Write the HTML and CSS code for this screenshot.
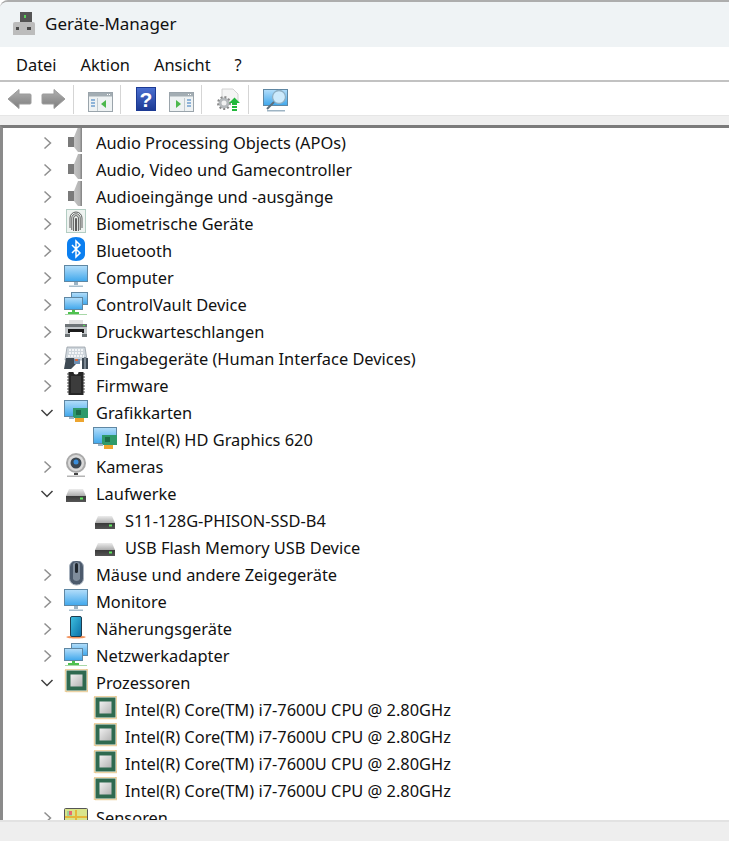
FILE: index.html
```html
<!DOCTYPE html>
<html lang="de">
<head>
    <meta charset="UTF-8">
    <title>Geräte-Manager</title>
    <link rel="stylesheet" href="styles.css">
</head>
<body>
    <svg class="defs" width="0" height="0">
        <defs>
            <linearGradient id="screen" x1="0" y1="0" x2="0" y2="1"><stop offset="0" stop-color="#b4defa"/><stop offset="1" stop-color="#3fa7ec"/></linearGradient>
            <linearGradient id="cone" x1="0" y1="0" x2="1" y2="0"><stop offset="0" stop-color="#c2c2c2"/><stop offset=".7" stop-color="#b4b4b4"/><stop offset="1" stop-color="#7e7e7e"/></linearGradient>
            <linearGradient id="arrow" x1="0" y1="0" x2="0" y2="1"><stop offset="0" stop-color="#b0b0b0"/><stop offset="1" stop-color="#7d7d7d"/></linearGradient>
            <linearGradient id="drive" x1="0" y1="0" x2="0" y2="1"><stop offset="0" stop-color="#ececec"/><stop offset=".5" stop-color="#b0b0b0"/><stop offset=".55" stop-color="#3a3a3a"/><stop offset="1" stop-color="#555"/></linearGradient>
            <linearGradient id="phone" x1="0" y1="0" x2="1" y2="1"><stop offset="0" stop-color="#3fc0e0"/><stop offset="1" stop-color="#0a6fa8"/></linearGradient>
            <linearGradient id="die" x1="0" y1="0" x2="1" y2="1"><stop offset="0" stop-color="#f0f0f0"/><stop offset="1" stop-color="#b4b4b4"/></linearGradient>

            <symbol id="i-speaker" viewBox="0 0 24 26" overflow="visible">
                <path d="M4 8h6v10H4z" fill="#7a7a7a"/>
                <path d="M10 8l4-10h4v25h-4l-4-5z" fill="url(#cone)"/>
            </symbol>
            <symbol id="i-finger" viewBox="0 0 24 26" overflow="visible">
                <rect x="2.500" y="-.5" width="19" height="23" fill="#eef3f0" stroke="#b3cdc3"/>
                <g fill="none" stroke="#4d4d4d" stroke-width=".9">
                    <path d="M6 18V8a6 6 0 0 1 12 0v10"/>
                    <path d="M7.800 20V8a4.200 4.200 0 0 1 8.400 0v12"/>
                    <path d="M9.600 21V8a2.400 2.400 0 0 1 4.800 0v13"/>
                    <path d="M11.500 21V8.500h1V21"/>
                </g>
            </symbol>
            <symbol id="i-bluetooth" viewBox="0 0 24 26">
                <path d="M12 0c6 0 9 3 9 7v10c0 4-3 7-9 7s-9-3-9-7V7c0-4 3-7 9-7z" fill="#0b7ff0"/>
                <path d="M8 8l8 8-4 4V4l4 4-8 8" fill="none" stroke="#fff" stroke-width="1.500"/>
            </symbol>
            <symbol id="i-monitor" viewBox="0 0 24 26">
                <rect x=".5" y="1.500" width="23" height="16" fill="url(#screen)" stroke="#5f87a3"/>
                <path d="M10 18h4v3h-4z" fill="#9db4c4"/>
                <path d="M5 21.500h14v1.500H5z" fill="#a9bfcd"/>
            </symbol>
            <symbol id="i-network" viewBox="0 0 24 26">
                <rect x="7.500" y="1.500" width="16" height="12" fill="url(#screen)" stroke="#5f87a3"/>
                <rect x=".5" y="6.500" width="18" height="12" fill="url(#screen)" stroke="#5f87a3"/>
                <path d="M8 19h3v2h4v3H4v-3h4z" fill="#4fc14f"/>
                <path d="M1 23h22v1H1z" fill="#a8d8a8"/>
            </symbol>
            <symbol id="i-printer" viewBox="0 0 24 26">
                <path d="M5 2h14v5H5z" fill="#e0e0e0"/>
                <path d="M1 6h22v12H1z" fill="#c3c7ca"/>
                <path d="M1 6h22v3H1z" fill="#6f7578"/>
                <path d="M4 11h16v4H4z" fill="#1c1c1c"/>
                <path d="M6 14h12v5H6z" fill="#fff"/>
                <path d="M1 16h5v3H1zM18 16h5v3h-5z" fill="#6c7275"/>
                <path d="M19 7h2v1h-2z" fill="#4fe04f"/>
            </symbol>
            <symbol id="i-input" viewBox="0 0 24 26">
                <path d="M3 2h18l2 13H1z" fill="#cfd6dc" stroke="#8d979f" stroke-width=".7"/>
                <path d="M5 5h14M5 8h14M4 11h16" stroke="#fff" stroke-width="1.500" stroke-dasharray="2 1"/>
                <path d="M0 24l2-11h8l2 6-5 5zM24 24h-6V13h6z" fill="#3f4a54"/>
                <path d="M20 12h2v12h-2z" fill="#7b8792"/>
                <path d="M10 14h6v5h-6z" fill="#6d8fb3"/>
                <path d="M11 14h3v2h-3z" fill="#d9673c"/>
            </symbol>
            <symbol id="i-chip" viewBox="0 0 24 26">
                <path d="M3 2h3M3 5h3M3 8h3M3 11h3M3 14h3M3 17h3M3 20h3M18 2h3M18 5h3M18 8h3M18 11h3M18 14h3M18 17h3M18 20h3" stroke="#8a8a8a" stroke-width="1.500"/>
                <path d="M4.500 0h5a2.500 2.500 0 0 0 5 0h5v23h-15z" fill="#262626"/>
                <path d="M7 4h10v17H7z" fill="#3c3c3c"/>
            </symbol>
            <symbol id="i-display" viewBox="0 0 24 26">
                <rect x=".5" y="1.500" width="23" height="16" fill="url(#screen)" stroke="#5f87a3"/>
                <path d="M9 9h15v10H9z" fill="#2f9a6b"/>
                <path d="M12 11h5v5h-5z" fill="#1d6d49"/>
                <path d="M11 19h9v4h-9z" fill="#eda52f"/>
                <path d="M5 18h5v2H5z" fill="#9db4c4"/>
            </symbol>
            <symbol id="i-camera" viewBox="0 0 24 26">
                <circle cx="12" cy="10" r="10" fill="#a9a9a9"/>
                <circle cx="12" cy="10" r="8" fill="#d9d9d9"/>
                <circle cx="12" cy="10" r="5.500" fill="#3b4650"/>
                <circle cx="12" cy="9" r="2.500" fill="#3a8edb"/>
                <path d="M10 20h4v2h-4z" fill="#444"/>
                <path d="M3 22.500h18v1.500H3z" fill="#b5b5b5"/>
            </symbol>
            <symbol id="i-drive" viewBox="0 0 24 26">
                <path d="M5 9h14l3 7v6H2v-6z" fill="url(#drive)"/>
                <path d="M16 17.500h3v2h-3z" fill="#5fe85f"/>
            </symbol>
            <symbol id="i-mouse" viewBox="0 0 24 26">
                <rect x="5.500" y="-.5" width="14" height="24.500" rx="6.500" fill="#4c5a6c" stroke="#a9b3bf"/>
                <path d="M9 3a4 4 0 0 1 7 0v15a4 4 0 0 1-7 0z" fill="#7f8c9b"/>
                <rect x="11" y="2" width="3" height="10" rx="1.500" fill="#20262d"/>
            </symbol>
            <symbol id="i-proximity" viewBox="0 0 24 26">
                <path d="M2 22c2-1 6-1.500 10-1.500s8 .5 10 1.500c-2 2-18 2-20 0z" fill="#f2925c"/>
                <rect x="6.500" y="1.500" width="11" height="20" rx="1.500" fill="url(#phone)" stroke="#1f3c4e"/>
            </symbol>
            <symbol id="i-cpu" viewBox="0 0 24 26">
                <rect x="1.500" y=".5" width="22" height="22" fill="none" stroke="#d9a54a" stroke-width="1.500" stroke-dasharray="1 1"/>
                <rect x="2.500" y="1.500" width="20" height="20" fill="#2f6a50"/>
                <rect x="6.500" y="5.500" width="12" height="12" fill="url(#die)"/>
            </symbol>
            <symbol id="i-sensor" viewBox="0 0 24 26">
                <rect x=".5" y="4.500" width="23" height="17" rx="1" fill="#d9e58c" stroke="#555"/>
                <path d="M3 7h5v6H3z" fill="#9fd39a"/>
                <path d="M5 7h3v4H5z" fill="#e8696d"/>
                <path d="M11 6h2v15h-2zM1 12h22v2H1z" fill="#e5b73b"/>
            </symbol>

            <symbol id="t-back" viewBox="0 0 25 22">
                <path d="M1 11L12 1.500v4.500h11a1 1 0 0 1 1 1v8a1 1 0 0 1-1 1H12v4.500z" fill="url(#arrow)" stroke="#9c9c9c"/>
            </symbol>
            <symbol id="t-forward" viewBox="0 0 25 22">
                <path d="M24 11L13 1.500v4.500H2a1 1 0 0 0-1 1v8a1 1 0 0 0 1 1h11v4.500z" fill="url(#arrow)" stroke="#9c9c9c"/>
            </symbol>
            <symbol id="t-pane-left" viewBox="0 0 25 22">
                <rect x=".5" y="1.500" width="24" height="19" fill="#eef2f3" stroke="#9aa4ab"/>
                <path d="M1 2h23v3.500H1z" fill="#a3adb3"/>
                <path d="M19 3h1v1h-1zM21 3h1v1h-1z" fill="#fff"/>
                <path d="M3 8h4v2H3zM3 11h4v2H3zM3 14h4v2H3z" fill="#8fb4d8"/>
                <path d="M9 7h1v13H9z" fill="#c0c9ce"/>
                <path d="M18 9v8l-5-4z" fill="#4cb84c"/>
            </symbol>
            <symbol id="t-pane-right" viewBox="0 0 25 22">
                <rect x=".5" y="1.500" width="24" height="19" fill="#eef2f3" stroke="#9aa4ab"/>
                <path d="M1 2h23v3.500H1z" fill="#a3adb3"/>
                <path d="M19 3h1v1h-1zM21 3h1v1h-1z" fill="#fff"/>
                <path d="M18 8h4v2h-4zM18 11h4v2h-4zM18 14h4v2h-4z" fill="#8fb4d8"/>
                <path d="M15 7h1v13h-1z" fill="#c0c9ce"/>
                <path d="M7 9v8l5-4z" fill="#4cb84c"/>
            </symbol>
            <symbol id="t-update" viewBox="0 0 25 25">
                <path d="M6 1h11l5 5v8H6z" fill="#f5f5f5" stroke="#d2d2d2"/>
                <circle cx="8" cy="15" r="5.500" fill="#b5b9bc"/>
                <circle cx="8" cy="15" r="6" fill="none" stroke="#8a8a8a" stroke-width="2" stroke-dasharray="2 2"/>
                <circle cx="8" cy="15" r="2.500" fill="#f2f2f2"/>
                <path d="M13 15l5.500-5.500L24 15h-3v2h-5v-2z" fill="#22b83c"/>
                <path d="M16 18h5v2h-5zM16 21h5v2h-5z" fill="#22b83c"/>
            </symbol>
            <symbol id="t-scan" viewBox="0 0 25 23">
                <rect x=".5" y=".5" width="24" height="16" fill="url(#screen)" stroke="#5f87a3"/>
                <circle cx="16" cy="8" r="6.500" fill="#cdeafc" stroke="#8fb0c5" stroke-width="1.300"/>
                <path d="M11 13l-7 7" stroke="#5e6e7a" stroke-width="2"/>
                <path d="M4 21h18v1.500H4z" fill="#9db4c4"/>
            </symbol>
            <symbol id="t-app" viewBox="0 0 22 23">
                <path d="M7 0h12v11H7z" fill="#555"/>
                <path d="M11 3h2v3h-2z" fill="#58d058"/>
                <path d="M2 10h18a2 2 0 0 1 2 2v11H0V12a2 2 0 0 1 2-2z" fill="#bcbcbc"/>
                <path d="M3 15h3v3H3zM14 15h4v3h-4z" fill="#4a4a4a"/>
            </symbol>
            <symbol id="chev-right" viewBox="0 0 10 14">
                <path d="M1.500 1.500L7.500 7l-6 5.500" fill="none" stroke="#8f8f8f" stroke-width="1.500"/>
            </symbol>
            <symbol id="chev-down" viewBox="0 0 14 10">
                <path d="M1.500 2l5.500 5.500L12.500 2" fill="none" stroke="#3f3f3f" stroke-width="1.500"/>
            </symbol>
        </defs>
    </svg>

    <div class="window">
        <header class="titlebar">
            <svg class="app-icon"><use href="#t-app"/></svg>
            <span>Geräte-Manager</span>
        </header>

        <nav class="menubar">
            <span>Datei</span>
            <span>Aktion</span>
            <span>Ansicht</span>
            <span>?</span>
        </nav>

        <div class="toolbar">
            <svg class="tool back"><use href="#t-back"/></svg>
            <svg class="tool forward"><use href="#t-forward"/></svg>
            <i class="sep"></i>
            <svg class="tool pane"><use href="#t-pane-left"/></svg>
            <i class="sep"></i>
            <span class="help">?</span>
            <svg class="tool pane after-help"><use href="#t-pane-right"/></svg>
            <i class="sep"></i>
            <svg class="tool update"><use href="#t-update"/></svg>
            <i class="sep"></i>
            <svg class="tool scan"><use href="#t-scan"/></svg>
        </div>

        <div class="band"></div>

        <main class="tree">
            <div class="row"><svg class="chev"><use href="#chev-right"/></svg><svg class="icon"><use href="#i-speaker"/></svg><span>Audio Processing Objects (APOs)</span></div>
            <div class="row"><svg class="chev"><use href="#chev-right"/></svg><svg class="icon"><use href="#i-speaker"/></svg><span>Audio, Video und Gamecontroller</span></div>
            <div class="row"><svg class="chev"><use href="#chev-right"/></svg><svg class="icon"><use href="#i-speaker"/></svg><span>Audioeingänge und -ausgänge</span></div>
            <div class="row"><svg class="chev"><use href="#chev-right"/></svg><svg class="icon"><use href="#i-finger"/></svg><span>Biometrische Geräte</span></div>
            <div class="row"><svg class="chev"><use href="#chev-right"/></svg><svg class="icon"><use href="#i-bluetooth"/></svg><span>Bluetooth</span></div>
            <div class="row"><svg class="chev"><use href="#chev-right"/></svg><svg class="icon"><use href="#i-monitor"/></svg><span>Computer</span></div>
            <div class="row"><svg class="chev"><use href="#chev-right"/></svg><svg class="icon"><use href="#i-network"/></svg><span>ControlVault Device</span></div>
            <div class="row"><svg class="chev"><use href="#chev-right"/></svg><svg class="icon"><use href="#i-printer"/></svg><span>Druckwarteschlangen</span></div>
            <div class="row"><svg class="chev"><use href="#chev-right"/></svg><svg class="icon"><use href="#i-input"/></svg><span>Eingabegeräte (Human Interface Devices)</span></div>
            <div class="row"><svg class="chev"><use href="#chev-right"/></svg><svg class="icon"><use href="#i-chip"/></svg><span>Firmware</span></div>
            <div class="row"><svg class="chev open"><use href="#chev-down"/></svg><svg class="icon"><use href="#i-display"/></svg><span>Grafikkarten</span></div>
            <div class="row child"><svg class="icon"><use href="#i-display"/></svg><span>Intel(R) HD Graphics 620</span></div>
            <div class="row"><svg class="chev"><use href="#chev-right"/></svg><svg class="icon"><use href="#i-camera"/></svg><span>Kameras</span></div>
            <div class="row"><svg class="chev open"><use href="#chev-down"/></svg><svg class="icon"><use href="#i-drive"/></svg><span>Laufwerke</span></div>
            <div class="row child"><svg class="icon"><use href="#i-drive"/></svg><span>S11-128G-PHISON-SSD-B4</span></div>
            <div class="row child"><svg class="icon"><use href="#i-drive"/></svg><span>USB Flash Memory USB Device</span></div>
            <div class="row"><svg class="chev"><use href="#chev-right"/></svg><svg class="icon"><use href="#i-mouse"/></svg><span>Mäuse und andere Zeigegeräte</span></div>
            <div class="row"><svg class="chev"><use href="#chev-right"/></svg><svg class="icon"><use href="#i-monitor"/></svg><span>Monitore</span></div>
            <div class="row"><svg class="chev"><use href="#chev-right"/></svg><svg class="icon"><use href="#i-proximity"/></svg><span>Näherungsgeräte</span></div>
            <div class="row"><svg class="chev"><use href="#chev-right"/></svg><svg class="icon"><use href="#i-network"/></svg><span>Netzwerkadapter</span></div>
            <div class="row"><svg class="chev open"><use href="#chev-down"/></svg><svg class="icon"><use href="#i-cpu"/></svg><span>Prozessoren</span></div>
            <div class="row child"><svg class="icon"><use href="#i-cpu"/></svg><span>Intel(R) Core(TM) i7-7600U CPU @ 2.80GHz</span></div>
            <div class="row child"><svg class="icon"><use href="#i-cpu"/></svg><span>Intel(R) Core(TM) i7-7600U CPU @ 2.80GHz</span></div>
            <div class="row child"><svg class="icon"><use href="#i-cpu"/></svg><span>Intel(R) Core(TM) i7-7600U CPU @ 2.80GHz</span></div>
            <div class="row child"><svg class="icon"><use href="#i-cpu"/></svg><span>Intel(R) Core(TM) i7-7600U CPU @ 2.80GHz</span></div>
            <div class="row"><svg class="chev"><use href="#chev-right"/></svg><svg class="icon"><use href="#i-sensor"/></svg><span>Sensoren</span></div>
        </main>

        <footer class="statusbar"></footer>
    </div>
</body>
</html>
```

FILE: styles.css
```css
html, body {
    margin: 0;
    padding: 0;
    height: 841px;
    overflow: hidden;
    background-color: #fff;
}
body {
    font-family: "Noto Sans", "Open Sans", sans-serif;
    color: #111;
}
.defs {
    position: absolute;
}
.window {
    height: 841px;
    display: flex;
    flex-direction: column;
    box-sizing: border-box;
    border-top: 2px solid #adadad;
    border-top-left-radius: 8px;
    overflow: hidden;
}
.titlebar {
    height: 45px;
    flex: none;
    display: flex;
    align-items: center;
    box-sizing: border-box;
    padding: 0 0 2px 13px;
    background-color: #eff3f5;
    font-size: 17px;
}
.app-icon {
    width: 22px;
    height: 23px;
    margin-right: 10px;
}
.menubar {
    height: 35px;
    flex: none;
    display: flex;
    align-items: center;
    gap: 24px;
    padding: 2px 0 0 16px;
    box-sizing: border-box;
    border-bottom: 2px solid #c2c2c2;
    font-size: 16.400px;
}
.toolbar {
    height: 33px;
    flex: none;
    display: flex;
    align-items: flex-start;
    padding-left: 7px;
}
.tool {
    width: 25px;
    height: 22px;
    flex: none;
    margin-top: 6px;
}
.tool.forward {
    margin-left: 9px;
}
.tool.update {
    height: 25px;
    margin-left: 14px;
}
.tool.scan {
    height: 23px;
    margin: 7px 0 0 14px;
}
.tool.pane {
    margin: 9px 0 0 14px;
}
.tool.after-help {
    margin-left: 13px;
}
.sep {
    width: 1px;
    height: 29px;
    background-color: #d5d5d5;
    margin: 3px 0 0 7px;
}
.help {
    width: 20px;
    height: 24px;
    margin: 5px 0 0 15px;
    flex: none;
    background: linear-gradient(#4a6fd0, #1c3a94);
    color: #fff;
    font-family: "Liberation Sans", sans-serif;
    font-weight: bold;
    font-size: 21px;
    line-height: 23px;
    text-align: center;
    border: 1px solid #1c3a94;
    box-sizing: border-box;
}
.band {
    height: 10px;
    flex: none;
    background-color: #efefef;
    border-top: 1px solid #e6e6e6;
    box-sizing: border-box;
}
.tree {
    flex: 1;
    min-height: 0;
    overflow: hidden;
    padding-top: 1px;
    border-top: 3px solid #7b7b7b;
    border-left: 3px solid #8a8a8a;
    font-size: 16.400px;
}
.row {
    height: 27px;
    display: flex;
    align-items: flex-start;
    padding-left: 61px;
    position: relative;
    line-height: 27px;
    white-space: nowrap;
}
.row.child {
    padding-left: 90px;
}
.chev {
    position: absolute;
    left: 40px;
    top: 7px;
    width: 10px;
    height: 14px;
}
.chev.open {
    left: 37px;
    top: 9px;
    width: 14px;
    height: 10px;
}
.icon {
    width: 24px;
    height: 26px;
    flex: none;
    margin-right: 8px;
    overflow: visible;
}
.statusbar {
    height: 21px;
    flex: none;
    background-color: #eeeeee;
    border-top: 2px solid #e2e2e2;
    box-sizing: border-box;
}
```
